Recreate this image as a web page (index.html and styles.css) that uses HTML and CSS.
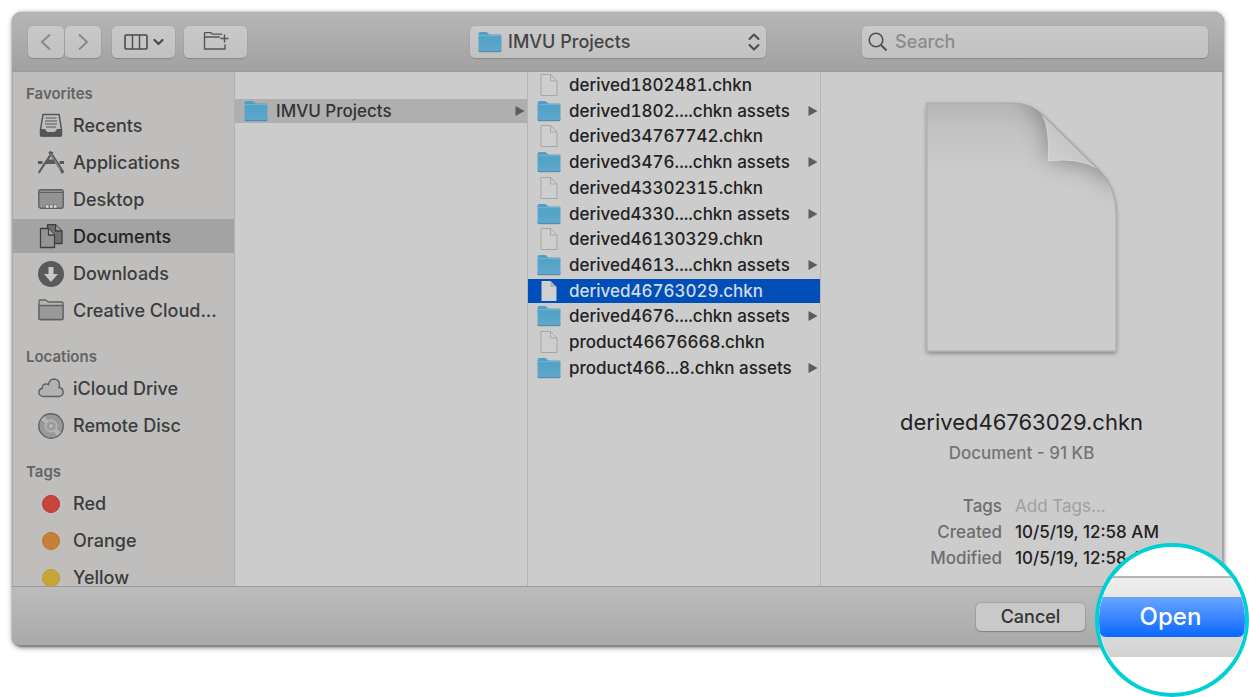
FILE: index.html
```html
<!DOCTYPE html>
<html lang="en">
<head>
<meta charset="utf-8">
<title>Open</title>
<link rel="stylesheet" href="styles.css">
</head>
<body>
<svg class="defs" aria-hidden="true">
  <defs>
    <linearGradient id="blue" x1="0" y1="0" x2="0" y2="1">
      <stop offset="0" stop-color="#4d9fc6"/><stop offset="1" stop-color="#5fa8cb"/>
    </linearGradient>
    <symbol id="folder" viewBox="0 0 24 22">
      <path d="M.5 3.2Q.5 1 2.5 1h5Q9 1 10 2.2T12 3.4h10q1.500 0 1.500 1.500V19q0 1.500-1.500 1.500H2Q.5 20.500.5 19z" fill="url(#blue)"/>
      <path d="M1 4.700h22.500" stroke="#7ab6d2" fill="none"/>
      <path d="M.5 19.500q.3 1.200 1.500 1.200h20q1.200 0 1.500-1.200" stroke="#4384a6" fill="none"/>
    </symbol>
    <symbol id="file" viewBox="0 0 18 24">
      <path d="M1 1.500h9.500L17 8v14.500H1z" fill="#cecece" stroke="#a6a6a6"/>
      <path d="M10.500 1.500V8H17" fill="none" stroke="#a6a6a6"/>
    </symbol>
    <symbol id="file-on" viewBox="0 0 18 24">
      <path d="M1.500 2h9L16.500 8v14h-15z" fill="#d0d0d0"/>
      <path d="M10.500 2l6 6h-6z" fill="#a9afba"/>
    </symbol>
    <symbol id="arrow" viewBox="0 0 10 12"><path d="M.5 1v10L9.500 6z" fill="currentColor"/></symbol>
  </defs>
</svg>
<main class="dialog">
  <header class="toolbar">
    <div class="tools">
      <div class="nav">
        <button class="tool nav-btn" aria-label="Back"><svg width="14" height="20" viewBox="0 0 14 20"><path d="M11 2.500 3 10l8 7.500" class="nav-stroke"/></svg></button>
        <button class="tool nav-btn" aria-label="Forward"><svg width="14" height="20" viewBox="0 0 14 20"><path d="M3 2.500 11 10l-8 7.500" class="nav-stroke"/></svg></button>
      </div>
      <button class="tool wide" aria-label="View as columns">
        <svg width="40" height="18" viewBox="0 0 40 18" fill="none" stroke="#4b4b4b">
          <rect x="1" y="2" width="22" height="14" rx="1" stroke-width="1.600"/><path d="M8.500 2v14M15.500 2v14" stroke-width="1.400"/><path d="M30.500 7l4 4 4-4" stroke-width="2.200" stroke-linecap="round" stroke-linejoin="round"/>
        </svg>
      </button>
      <button class="tool wide" aria-label="New folder">
        <svg width="26" height="20" viewBox="0 0 26 20" fill="none" stroke="#555" stroke-width="1.400">
          <path d="M22 12.500V17H1.500V1.500q0-1 1-1H7q1 0 1.500.800t1.500.800h9M1.500 5H17M21.500 2.500v8M17.500 6.500h8"/>
        </svg>
      </button>
    </div>
    <div class="tool location">
      <svg class="folder-icon"><use href="#folder"/></svg>
      <select class="location-select" aria-label="Location"><option>IMVU Projects</option></select>
      <svg class="updown" width="14" height="20" viewBox="0 0 14 20"><path d="M2.500 7 7 2.500 11.500 7M2.500 13 7 17.500l4.500-4.500" fill="none" stroke="#4b4b4b" stroke-width="2" stroke-linecap="round" stroke-linejoin="round"/></svg>
    </div>
    <label class="tool search">
      <svg width="20" height="20" viewBox="0 0 20 20" fill="none" stroke="#505050"><circle cx="8" cy="8" r="6.800" stroke-width="1.600"/><path d="M13 13l5.500 5.500" stroke-width="2"/></svg>
      <input class="search-input" type="search" placeholder="Search" aria-label="Search">
    </label>
  </header>

  <div class="browser">
    <nav class="sidebar">
      <section class="group">
        <h2 class="group-title">Favorites</h2>
        <ul class="places">
          <li><button class="place"><svg class="place-icon" viewBox="0 0 26 26" fill="none" stroke="#555"><path d="M5 1.500h16l2.500 15V22q0 1-1 1h-19q-1 0-1-1v-5.500z" stroke-width="1.500"/><path d="M2.500 16.500H7q1 3 3 3h6q2 0 3-3h4.500V23h-21z" fill="#555"/><path d="M7.500 5h11M7 8h12M7 11h12M8 14h10"/></svg>Recents</button></li>
          <li><button class="place"><svg class="place-icon" viewBox="0 0 26 26" fill="none" stroke="#5a5a5a"><path d="M14.500 2 2.500 20l-1.700 3" stroke-width="2.200"/><path d="M11.500 1.500l12 18.500 1.500 3" stroke-width="3"/><path d="M12.500 4l10 15.500" stroke="#aaa" stroke-width=".8"/><path d="M0 12.500h4.500M8 12.500h9M21.500 12.500H26" stroke-width="3"/><path d="M10 10.500h6" stroke-width="2"/></svg>Applications</button></li>
          <li><button class="place"><svg class="place-icon" viewBox="0 0 26 26"><rect x=".8" y="2.800" width="24.400" height="18.400" rx="2" fill="#939393" stroke="#606060" stroke-width="1.400"/><path d="M1 5.500h24" stroke="#606060"/><path d="M7 17.500h12v3H7z" fill="#777"/><path d="M8 19.500h2.500m1.500 0h2.500m1.500 0h2.500" stroke="#ddd" stroke-width="2.400"/></svg>Desktop</button></li>
          <li><button class="place selected" aria-current="true"><svg class="place-icon" viewBox="0 0 26 26" stroke="#3e3e3e" stroke-width="1.300" stroke-linejoin="round"><path d="M9.500.700h8L24 7v12.500H9.500z" fill="#707070"/><path d="M17.500.700V7H24" fill="#999"/><path d="M2.500 4.500h8l6 6.500v12.500h-14z" fill="#949494"/><path d="M10.500 4.500V11h6" fill="#aaa"/></svg>Documents</button></li>
          <li><button class="place"><svg class="place-icon" viewBox="0 0 26 26"><circle cx="13" cy="13" r="13" fill="#5a5a5a"/><path d="M10.500 6h5v7h4.500L13 21 6 13h4.500z" fill="#c9c8c7"/></svg>Downloads</button></li>
          <li><button class="place"><svg class="place-icon" viewBox="0 0 26 26" stroke="#626262" stroke-width="1.300"><path d="M1 3q0-1 1-1h5q1 0 2 1t2 1h13q1 0 1 1v15.500q0 1-1 1H2q-1 0-1-1z" fill="#b5b4b3"/><path d="M1 7.500h24v13q0 1-1 1H2q-1 0-1-1z" fill="#999"/></svg>Creative Cloud...</button></li>
        </ul>
      </section>
      <section class="group">
        <h2 class="group-title">Locations</h2>
        <ul class="places">
          <li><button class="place"><svg class="place-icon" viewBox="0 0 26 26"><path d="M5 20.500Q1 20 .800 16.300 1 13 4.300 12.300 4 8 8.500 8q1.500 0 2 .5Q11.500 3 16 3q5.500.5 5.500 6l-.5 2.500q4 .5 4.200 4.500T21 20.500z" fill="#b3b2b1" stroke="#606060" stroke-width="1.400"/></svg>iCloud Drive</button></li>
          <li><button class="place"><svg class="place-icon" viewBox="0 0 26 26"><circle cx="13" cy="13" r="12.200" fill="#989898" stroke="#626262" stroke-width="1.400"/><path d="M13 13 3 7l4-4zM13 13l10 6-4 4z" fill="#b5b5b5"/><circle cx="13" cy="13" r="6" fill="#a2a2a2" stroke="#c0c0c0"/><circle cx="13" cy="13" r="2.500" fill="#bfbebd" stroke="#888"/></svg>Remote Disc</button></li>
        </ul>
      </section>
      <section class="group">
        <h2 class="group-title">Tags</h2>
        <ul class="places">
          <li><button class="place"><span class="dot red"></span>Red</button></li>
          <li><button class="place"><span class="dot orange"></span>Orange</button></li>
          <li><button class="place"><span class="dot yellow"></span>Yellow</button></li>
        </ul>
      </section>
    </nav>

    <div class="column parent">
      <button class="entry open"><svg class="folder-icon"><use href="#folder"/></svg><span class="name">IMVU Projects</span><svg class="more"><use href="#arrow"/></svg></button>
    </div>

    <div class="column">
      <ul class="files">
        <li><button class="entry"><svg class="file-icon"><use href="#file"/></svg><span class="name">derived1802481.chkn</span></button></li>
        <li><button class="entry"><svg class="folder-icon"><use href="#folder"/></svg><span class="name">derived1802....chkn assets</span><svg class="more"><use href="#arrow"/></svg></button></li>
        <li><button class="entry"><svg class="file-icon"><use href="#file"/></svg><span class="name">derived34767742.chkn</span></button></li>
        <li><button class="entry"><svg class="folder-icon"><use href="#folder"/></svg><span class="name">derived3476....chkn assets</span><svg class="more"><use href="#arrow"/></svg></button></li>
        <li><button class="entry"><svg class="file-icon"><use href="#file"/></svg><span class="name">derived43302315.chkn</span></button></li>
        <li><button class="entry"><svg class="folder-icon"><use href="#folder"/></svg><span class="name">derived4330....chkn assets</span><svg class="more"><use href="#arrow"/></svg></button></li>
        <li><button class="entry"><svg class="file-icon"><use href="#file"/></svg><span class="name">derived46130329.chkn</span></button></li>
        <li><button class="entry"><svg class="folder-icon"><use href="#folder"/></svg><span class="name">derived4613....chkn assets</span><svg class="more"><use href="#arrow"/></svg></button></li>
        <li><button class="entry chosen"><svg class="file-icon"><use href="#file-on"/></svg><span class="name">derived46763029.chkn</span></button></li>
        <li><button class="entry"><svg class="folder-icon"><use href="#folder"/></svg><span class="name">derived4676....chkn assets</span><svg class="more"><use href="#arrow"/></svg></button></li>
        <li><button class="entry"><svg class="file-icon"><use href="#file"/></svg><span class="name">product46676668.chkn</span></button></li>
        <li><button class="entry"><svg class="folder-icon"><use href="#folder"/></svg><span class="name">product466...8.chkn assets</span><svg class="more"><use href="#arrow"/></svg></button></li>
      </ul>
    </div>

    <section class="preview">
      <svg class="page-art" width="202" height="266" viewBox="0 0 202 266">
        <defs>
          <filter id="drop" x="-10%" y="-10%" width="120%" height="120%"><feDropShadow dx="0" dy="2" stdDeviation="2" flood-opacity=".35"/></filter>
          <filter id="soft" x="-40%" y="-40%" width="180%" height="180%"><feGaussianBlur stdDeviation="11"/></filter>
          <linearGradient id="top" x1="0" y1="0" x2="0" y2="1"><stop offset="0" stop-color="#b6b6b6"/><stop offset=".1" stop-color="#c2c2c2"/><stop offset=".28" stop-color="#cbcbcb"/><stop offset="1" stop-color="#cccccc"/></linearGradient>
          <linearGradient id="curl" x1="0" y1="1" x2=".7" y2=".3"><stop offset="0" stop-color="#d2d2d2"/><stop offset="1" stop-color="#c2c2c2"/></linearGradient>
          <clipPath id="sheet"><path d="M6 8H92Q110 8 123 21L177 74Q195 90 195 120V256H6z"/></clipPath>
        </defs>
        <path d="M6 8H92Q110 8 123 21L177 74Q195 90 195 120V256H6z" fill="url(#top)" stroke="#aaa" filter="url(#drop)"/>
        <g clip-path="url(#sheet)"><path d="M95 0Q126 14 128 66 175 64 200 98V50L140 0z" fill="#777" opacity=".75" filter="url(#soft)"/></g>
        <path d="M121 19Q129 32 127.500 66 156 62 176 73z" fill="url(#curl)"/>
        <path d="M121 19Q129 32 127.500 66 156 62 176 73" fill="none" stroke="#d6d6d6"/>
        <path d="M121 19 176 73" stroke="#a8a8a8" stroke-width="1.500"/>
      </svg>
      <h1 class="title">derived46763029.chkn</h1>
      <p class="kind">Document - 91 KB</p>
      <dl class="facts">
        <dt>Tags</dt><dd class="faint">Add Tags...</dd>
        <dt>Created</dt><dd>10/5/19, 12:58 AM</dd>
        <dt>Modified</dt><dd>10/5/19, 12:58 AM</dd>
      </dl>
    </section>
  </div>

  <footer class="actions"><button class="cancel">Cancel</button></footer>
</main>

<div class="lens">
  <div class="lens-bar"><button class="open-btn">Open</button></div>
</div>
</body>
</html>
```

FILE: styles.css
```css
* { box-sizing: border-box; }

body {
  position: relative;
  height: 100vh;
  margin: 0;
  padding: 12px 25px 50px 12px;
  background: #fff;
  color: #222;
  font: 500 17px/24px Inter, "Liberation Sans", sans-serif;
  overflow: hidden;
}

button, input, select { font: inherit; color: inherit; margin: 0; padding: 0; border: 0; background: none; }
ul, dl, dd, h1, h2, p { margin: 0; padding: 0; list-style: none; }
svg { display: block; flex: none; }
.defs { position: absolute; width: 0; height: 0; }

.dialog {
  display: flex;
  flex-direction: column;
  height: 100%;
  border-radius: 10px;
  background: #a6a6a6;
  box-shadow: 0 1px 5px rgba(0, 0, 0, .45), 0 0 1px #777;
  overflow: hidden;
}

.toolbar {
  display: grid;
  grid-template-columns: 1fr 296px 1fr;
  flex: none;
  align-items: center;
  height: 60px;
  padding: 0 16px;
  border-bottom: 1px solid #9a9a9a;
  background: linear-gradient(#b6b6b6, #a1a1a1);
}
.tools { display: flex; }
.tool {
  display: flex;
  align-items: center;
  justify-content: center;
  height: 32px;
  border-radius: 5px;
  background: linear-gradient(#c9c9c9, #c1c1c1);
  box-shadow: 0 1px 1px #888, 0 0 1px #8c8c8c;
}
.nav { display: flex; gap: 1px; margin-right: 11px; }
.nav-btn { width: 36px; }
.nav-stroke { fill: none; stroke: #888; stroke-width: 2; }
.wide { width: 63px; margin-right: 9px; }
.location { position: relative; padding-left: 8px; }
.location-select { flex: 1; height: 32px; margin-left: 6px; appearance: none; color: #444; font-size: 18px; }
.updown { position: absolute; right: 5px; top: 6px; pointer-events: none; }
.search { justify-self: end; width: 346px; padding: 0 6px; gap: 7px; }
.search-input { flex: 1; min-width: 0; outline: 0; font-size: 18px; }
.search-input::placeholder { color: #8b8b8b; opacity: 1; }

.browser {
  display: grid;
  grid-template-columns: 223px 293px 293px 1fr;
  flex: 1;
  min-height: 0;
  margin-right: 2px;
  background: #ccc;
}

.sidebar {
  display: flex;
  flex-direction: column;
  gap: 19px;
  padding-top: 11px;
  border-left: 1px solid #aaa;
  border-right: 1px solid #b0b0b0;
  background: #bfbebd;
  overflow: hidden;
}
.group-title { margin: 0 0 3px 13px; color: #636363; font: 600 15px/22px Inter, sans-serif; }
.places { display: flex; flex-direction: column; gap: 3px; }
.place {
  display: flex;
  align-items: center;
  gap: 9px;
  width: 100%;
  height: 34px;
  padding: 2px 0 0 25px;
  color: #3c3c3c;
  font-size: 18px;
  text-align: left;
  white-space: nowrap;
}
.selected { background: #a3a3a3; color: #222; }
.place-icon { width: 26px; height: 26px; }
.dot { width: 18px; height: 18px; margin: 0 4px; border-radius: 50%; }
.red { background: #c7443f; border: 1px solid #c2302c; }
.orange { background: #c78039; border: 1px solid #c47420; }
.yellow { background: #c6a638; border: 1px solid #c29c20; }

.column { border-right: 1px solid #b5b5b5; overflow: hidden; }
.parent { padding-top: 27px; }
.files { display: flex; flex-direction: column; justify-content: space-between; height: 308px; padding-top: 1px; }
.entry {
  display: flex;
  align-items: center;
  width: 100%;
  height: 24px;
  padding: 0 2px 0 9px;
  font-variant-numeric: tabular-nums;
  text-align: left;
  white-space: nowrap;
}
.open { background: #afafaf; color: #333; }
.chosen { background: #004fb8; color: #d3dbe8; }
.name { flex: 1; margin-left: 8px; }
.folder-icon { width: 24px; height: 22px; }
.file-icon { width: 18px; height: 24px; margin: 0 3px; }
.more { width: 10px; height: 12px; color: #5c5c5c; }

.preview { display: flex; flex-direction: column; align-items: center; padding-top: 23px; }
.title { margin-top: 46px; font: 400 22px/30px Inter, sans-serif; }
.kind { margin-top: 4px; color: #747474; }
.facts {
  display: grid;
  grid-template-columns: 181px auto;
  column-gap: 13px;
  align-self: stretch;
  margin-top: 28px;
  line-height: 26px;
}
.facts dt { color: #6d6d6d; text-align: right; }
.facts .faint { color: #a0a0a0; font-weight: 400; }

.actions {
  display: flex;
  flex: none;
  justify-content: flex-end;
  align-items: flex-start;
  height: 61px;
  padding: 16px 139px 0 0;
  border-top: 1px solid #999;
  border-bottom: 2px solid #888;
  background: linear-gradient(#bcbcbc, #a9a9a9);
}
.cancel {
  width: 109px;
  height: 28px;
  border-radius: 5px;
  background: #c9c9c9;
  box-shadow: 0 0 2px #777, 0 1px 1px #888;
  color: #333;
  font-size: 18px;
}

/* Magnifier over the default button */
.lens {
  position: absolute;
  right: 0;
  bottom: 0;
  width: 154px;
  height: 154px;
  padding-top: 29px;
  border: 4px solid #00cfd5;
  border-radius: 50%;
  background: #fff;
  overflow: hidden;
}
.lens-bar {
  height: 81px;
  padding-top: 19px;
  border-top: 2px solid #b5b5b5;
  background: linear-gradient(#eee, #d3d3d3);
}
.open-btn {
  width: 100%;
  height: 40px;
  padding-right: 3px;
  border-radius: 0 0 7px 7px;
  background: linear-gradient(#6aa6ff, #0a67ff);
  color: #fff;
  font-size: 24px;
}
```
